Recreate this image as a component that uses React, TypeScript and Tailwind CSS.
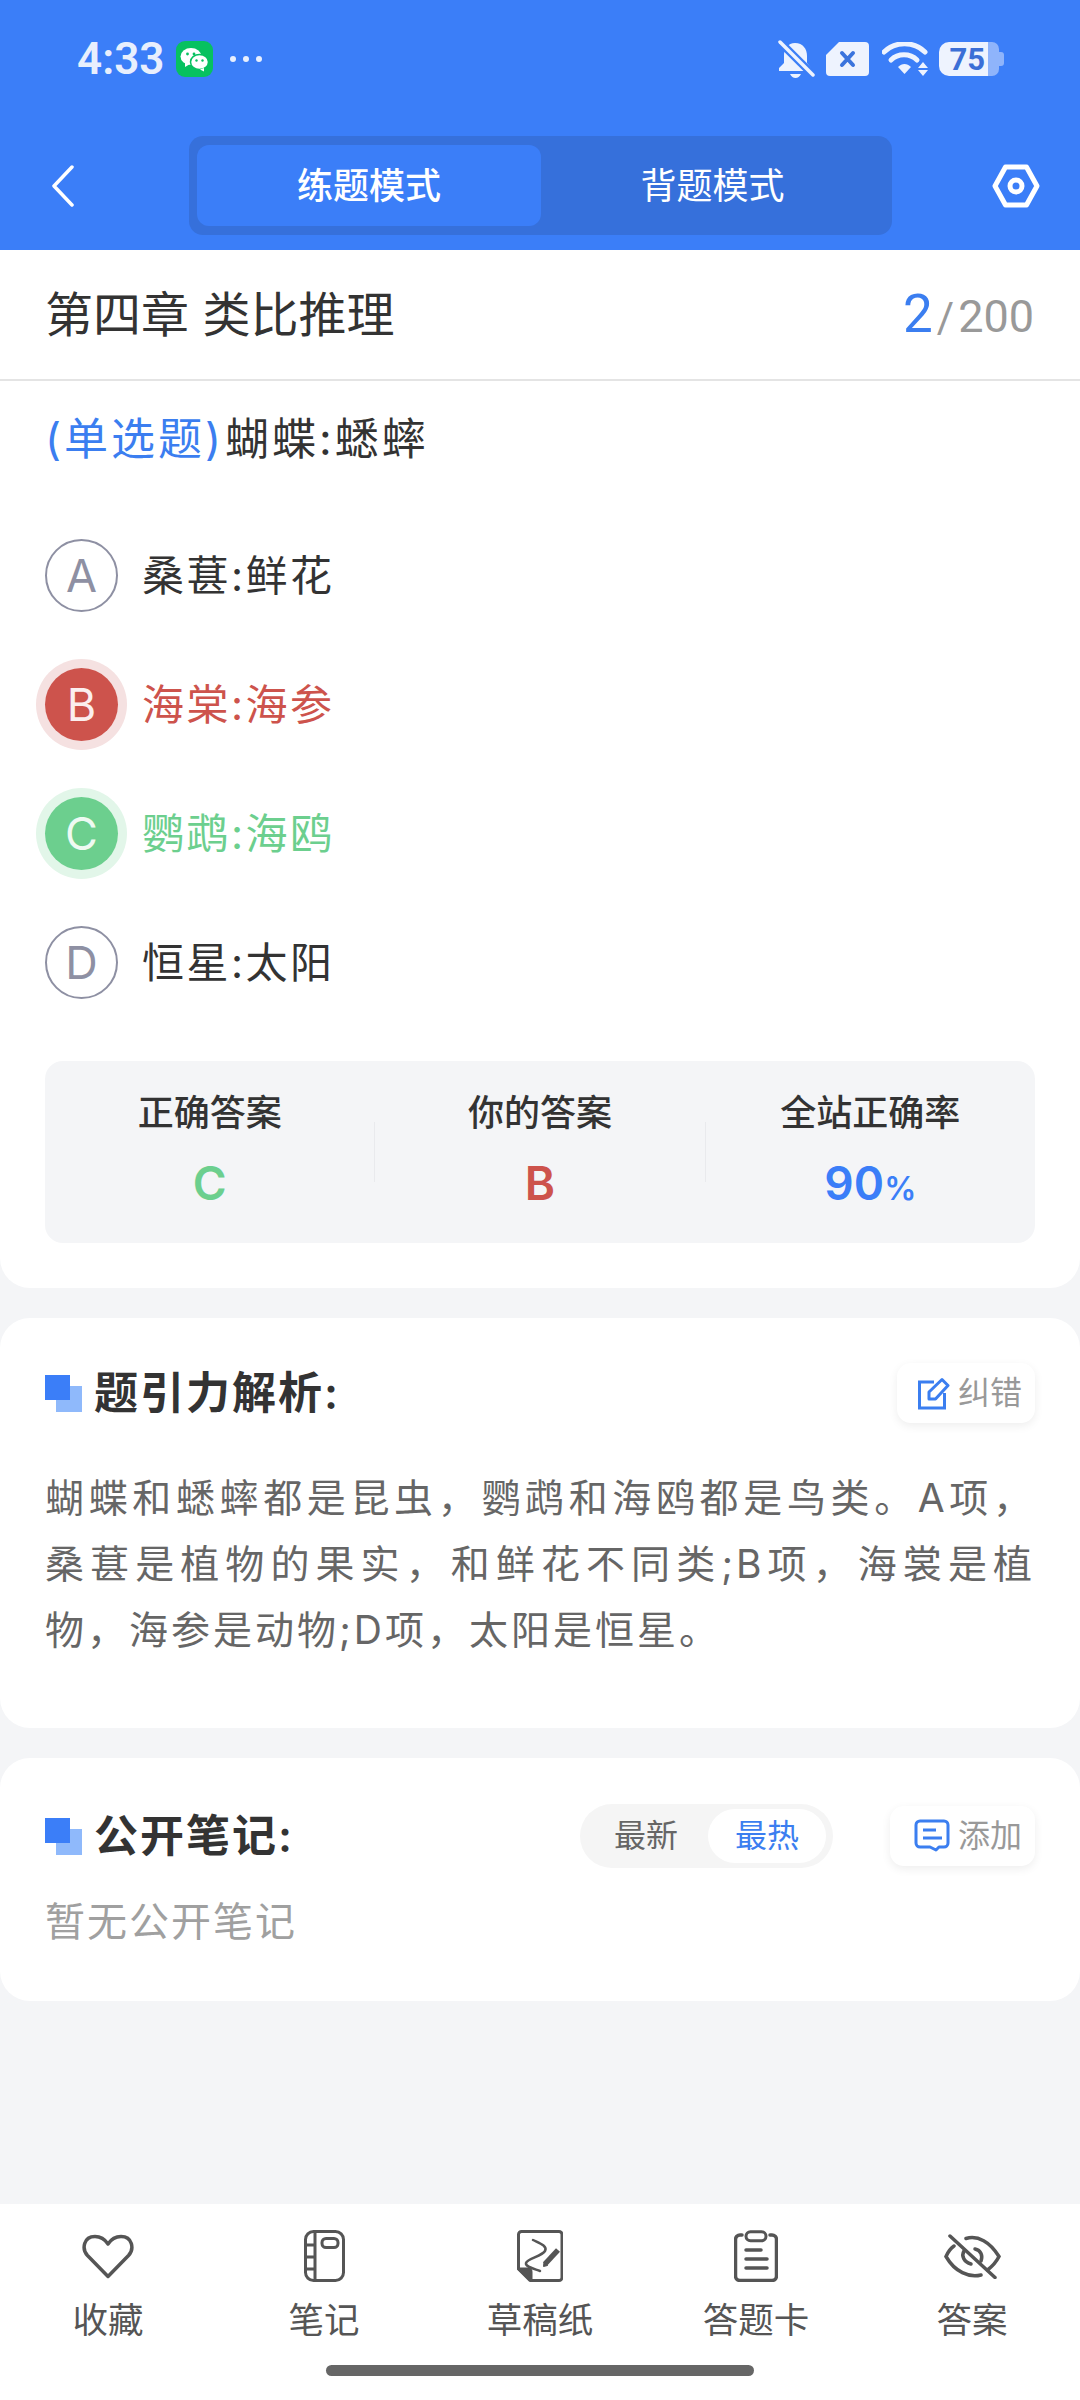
const options = [
  { key: 'A', text: '桑葚:鲜花', state: 'normal' },
  { key: 'B', text: '海棠:海参', state: 'wrong' },
  { key: 'C', text: '鹦鹉:海鸥', state: 'right' },
  { key: 'D', text: '恒星:太阳', state: 'normal' }
]

const HeartIcon = () => (
  <svg width="52" height="45" viewBox="0 0 52 45" fill="none" stroke="#555" strokeWidth="3.5" strokeLinejoin="round">
    <path d="M26 42.5 5.5 21.5C-.5 15 1.5 2.5 13 2.5c6 0 10 3 13 7.5 3-4.500 7-7.500 13-7.500 11.500 0 13.500 12.500 7.500 19Z" />
  </svg>
)

const NotebookIcon = () => (
  <svg width="41" height="52" viewBox="0 0 41 52" fill="none" stroke="#555" strokeWidth="3">
    <rect x="1.500" y="1.500" width="38" height="49" rx="8" />
    <path d="M11 2v48M2 15h9M2 27h9M2 39h9" />
    <rect x="18" y="8.500" width="16" height="9" rx="4" />
  </svg>
)

const DraftIcon = () => (
  <svg width="46" height="52" viewBox="0 0 46 52" fill="none" stroke="#555" strokeWidth="3">
    <path d="M13 50.500h29a3 3 0 0 0 3-3V4.500a3 3 0 0 0-3-3H4.500a3 3 0 0 0-3 3V39Z" strokeLinejoin="round" />
    <path d="M2 39h9q3 0 3 3v8Z" fill="#555" />
    <path d="M16 10c6 3 15 6 12 11S10 29 9 33s9 6 14 8" strokeWidth="2.500" strokeLinecap="round" />
    <path d="M28 34 41 20" strokeWidth="5.500" />
    <path d="M26.500 36.500 27 32l3.500 3.500Z" fill="#555" strokeWidth="1" />
  </svg>
)

const ClipboardIcon = () => (
  <svg width="44" height="52" viewBox="0 0 44 52" fill="none" stroke="#555" strokeWidth="3.500" strokeLinecap="round">
    <path d="M8 5H6a4.500 4.500 0 0 0-4.500 4.500V46A4.500 4.500 0 0 0 6 50.500h32a4.500 4.500 0 0 0 4.500-4.500V9.500A4.500 4.500 0 0 0 38 5h-2" />
    <rect x="12" y="1.800" width="20" height="9" rx="4.500" strokeWidth="3" />
    <path d="M12 20h15M12 29h21M12 38h21" />
  </svg>
)

const EyeOffIcon = () => (
  <svg width="57" height="45" viewBox="0 0 57 45" fill="none" stroke="#555" strokeWidth="3.500" strokeLinecap="round">
    <path d="M22 4.500C34 1 46 8 55 22.500c-2.500 5-7 10-11.500 13.500" />
    <path d="M37 41C25 44 11 38 2 22.500 4 18 7 14 10 12" />
    <path d="M20 17c-3 5 0 11 7 13M31 15c6 1 8 7 6 12" />
    <path d="M6 2 51 43.500" />
  </svg>
)

const tabs = [
  { label: '收藏', icon: <HeartIcon /> },
  { label: '笔记', icon: <NotebookIcon /> },
  { label: '草稿纸', icon: <DraftIcon /> },
  { label: '答题卡', icon: <ClipboardIcon /> },
  { label: '答案', icon: <EyeOffIcon /> }
]

const StatusBar = () => (
  <div className="flex h-[118px] items-center justify-between pl-[77px] pr-[76px]">
    <div className="flex items-center">
      <span className="w-[99px] font-['Roboto'] text-[44px] font-semibold leading-none text-[#e8effd]">4:33</span>
      <div className="flex h-[36px] w-[37px] items-center justify-center rounded-[9px] bg-[#07c160]">
        <svg width="29" height="25" viewBox="0 0 29 25">
          <ellipse cx="11" cy="9.500" rx="10.500" ry="8.500" fill="#fff" />
          <path d="M5 15v5l5-3Z" fill="#fff" />
          <ellipse cx="19.500" cy="15" rx="9" ry="7.500" fill="#fff" stroke="#07c160" strokeWidth="1.500" />
          <path d="M24 21v3.500l-4-2Z" fill="#fff" />
          <circle cx="7.500" cy="7" r="1.400" fill="#07c160" />
          <circle cx="14" cy="7" r="1.400" fill="#07c160" />
          <circle cx="16.500" cy="13.500" r="1.200" fill="#07c160" />
          <circle cx="22.500" cy="13.500" r="1.200" fill="#07c160" />
        </svg>
      </div>
      <div className="ml-[17px] flex gap-[7px]">
        <span className="size-[6px] rounded-full bg-[#e8effd]" />
        <span className="size-[6px] rounded-full bg-[#e8effd]" />
        <span className="size-[6px] rounded-full bg-[#e8effd]" />
      </div>
    </div>
    <div className="flex items-center">
      <svg width="37" height="39" viewBox="0 0 37 39" className="mr-[11px]">
        <path d="M17 3c8 0 12 6 12 13v7l4 5v3H1v-3l5-5v-8C6 9 10 3 17 3Z" fill="#eef3fe" />
        <path d="M12 34h11q-2 4-5.500 4T12 34Z" fill="#eef3fe" />
        <path d="M1 1l35 35" stroke="#3b7ef7" strokeWidth="8" />
        <path d="M2 2l33 33" stroke="#eef3fe" strokeWidth="3.500" strokeLinecap="round" />
      </svg>
      <svg width="43" height="34" viewBox="0 0 43 34" className="mr-[13px]">
        <path d="M13 0h26a4 4 0 0 1 4 4v26a4 4 0 0 1-4 4H4a4 4 0 0 1-4-4V13Z" fill="#eef3fe" />
        <path d="m16 11 11 12M27 11 16 23" stroke="#3b74dd" strokeWidth="4" strokeLinecap="round" />
      </svg>
      <svg width="46" height="34" viewBox="0 0 46 34" className="mr-[11px]">
        <path d="M2 10C13-1 32-1 43 10" fill="none" stroke="#eef3fe" strokeWidth="5" strokeLinecap="round" />
        <path d="M9 18c7-7 19-7 26 0" fill="none" stroke="#eef3fe" strokeWidth="5" strokeLinecap="round" />
        <path d="M16 25c4-4 9-4 13 0l-6.500 7Z" fill="#eef3fe" />
        <path d="M41 20l5 6H36ZM36 28h10l-5 6Z" fill="#eef3fe" />
      </svg>
      <div className="flex h-[34px] items-center">
        <div className="flex h-full w-[49px] items-center justify-end rounded-l-[10px] bg-[#eef3fe] pr-[3px] font-['Roboto'] text-[31px] font-bold leading-none text-[#3b6fd6]">
          75
        </div>
        <div className="h-full w-[11px] rounded-r-[7px] bg-[#8fb4fb]" />
        <div className="h-[14px] w-[5px] rounded-r-[3px] bg-[#8fb4fb]" />
      </div>
    </div>
  </div>
)

const Header = () => (
  <div className="h-[250px] bg-[#3b7ef8]">
    <StatusBar />
    <div className="mt-[18px] flex h-[99px] items-center pl-[51px] pr-[40px]">
      <svg width="24" height="42" viewBox="0 0 24 42" fill="none" stroke="#fff" strokeWidth="3.500" strokeLinecap="round" strokeLinejoin="round">
        <path d="M21 2 3 21l18 19" />
      </svg>
      <div className="ml-[114px] flex h-[99px] w-[703px] items-center rounded-[14px] bg-[#3670db] px-[8px] text-[36px] text-white">
        <div className="flex h-[81px] w-[344px] items-center justify-center rounded-[12px] bg-[#3b7ef8] font-medium">练题模式</div>
        <div className="flex h-[81px] flex-1 items-center justify-center">背题模式</div>
      </div>
      <svg width="48" height="44" viewBox="0 0 48 44" fill="none" stroke="#fff" strokeWidth="5" strokeLinejoin="round" className="ml-auto">
        <path d="M13.500 3h21L45 22 34.500 41h-21L3 22Z" />
        <circle cx="24" cy="22" r="6" />
      </svg>
    </div>
  </div>
)

const OptionRow = ({ option }: { option: (typeof options)[number] }) => {
  const circle =
    option.state === 'wrong'
      ? 'bg-[#cd534c] text-[#fbeeee] ring-[9px] ring-[#f5e1e1]'
      : option.state === 'right'
        ? 'bg-[#6ccf8e] text-[#eefaf2] ring-[9px] ring-[#e2f6e9]'
        : 'border-2 border-[#8e90a3] text-[#8e90a3]'
  const label =
    option.state === 'wrong'
      ? 'text-[#cd534c]'
      : option.state === 'right'
        ? 'text-[#6ccf8e]'
        : 'text-[#333]'
  return (
    <div className="flex h-[129px] items-center">
      <div className={`flex size-[73px] items-center justify-center rounded-full text-[45px] font-normal ${circle}`}>
        {option.key}
      </div>
      <span className={`ml-[24px] text-[42px] tracking-[2.500px] ${label}`}>{option.text}</span>
    </div>
  )
}

const Stat = ({ label, children }: { label: string; children: React.ReactNode }) => (
  <div className="flex flex-1 flex-col items-center">
    <span className="text-[36px] font-medium leading-[52px] text-[#333]">{label}</span>
    <div className="mt-[18px] h-[52px] leading-[52px]">{children}</div>
  </div>
)

const SectionTitle = ({ children }: { children: string }) => (
  <div className="flex items-center">
    <div className="relative size-[37px]">
      <div className="absolute bottom-0 right-0 size-[26px] bg-[#8fb9fb]" />
      <div className="absolute left-0 top-0 size-[25px] bg-[#3b7ef8]" />
    </div>
    <span className="ml-[12px] text-[44px] font-semibold tracking-[2px] text-[#333]">{children}</span>
  </div>
)

const SmallButton = ({ icon, label, width }: { icon: React.ReactNode; label: string; width: string }) => (
  <div className={`flex h-[60px] items-center justify-end gap-[8px] rounded-[14px] bg-white pr-[13px] text-[32px] text-[#999] shadow-[0_3px_10px_rgba(0,0,0,0.07)] ${width}`}>
    {icon}
    <span>{label}</span>
  </div>
)

const App = () => {
  return (
    <div className="flex h-[2400px] w-[1080px] flex-col overflow-hidden bg-[#f4f5f7] font-['Inter','Noto_Sans_CJK_SC',sans-serif]">
      <Header />

      <section className="rounded-b-[30px] bg-white pb-[45px]">
        <div className="flex h-[131px] items-center justify-between border-b-2 border-[#e4e4e4] pl-[45px] pr-[46px]">
          <h1 className="text-[48px] font-normal text-[#333]">第四章 类比推理</h1>
          <div className="flex items-baseline font-['Roboto'] text-[#999]">
            <span className="text-[53px] text-[#3b7ef0]">2</span>
            <span className="ml-[4px] text-[42px]">/</span>
            <span className="ml-[4px] text-[45px]">200</span>
          </div>
        </div>

        <div className="px-[45px]">
          <p className="flex h-[118px] items-start pt-[28px] text-[44px] leading-[60px] tracking-[3px] text-[#333]">
            <span className="text-[#3b7ef0]">(单选题)</span>
            <span className="ml-[1px]">蝴蝶:蟋蟀</span>
          </p>
          <div className="mt-[12px]">
            {options.map(option => (
              <OptionRow key={option.key} option={option} />
            ))}
          </div>

          <div className="mt-[34px] flex h-[182px] items-start rounded-[18px] bg-[#f4f5f7] pt-[26px]">
            <Stat label="正确答案">
              <span className="text-[46px] font-semibold text-[#6ccf8e]">C</span>
            </Stat>
            <div className="mt-[35px] h-[60px] w-px bg-[#e9eaed]" />
            <Stat label="你的答案">
              <span className="text-[46px] font-semibold text-[#cd534c]">B</span>
            </Stat>
            <div className="mt-[35px] h-[60px] w-px bg-[#e9eaed]" />
            <Stat label="全站正确率">
              <span className="text-[46px] font-semibold text-[#3b7ef8]">90</span>
              <span className="text-[32px] font-semibold text-[#3b7ef8]">%</span>
            </Stat>
          </div>
        </div>
      </section>

      <section className="mt-[30px] h-[410px] rounded-[30px] bg-white px-[45px] pt-[42px]">
        <div className="flex items-center justify-between">
          <SectionTitle>题引力解析:</SectionTitle>
          <SmallButton
            width="w-[138px]"
            label="纠错"
            icon={
              <svg width="33" height="33" viewBox="0 0 33 33" fill="none" stroke="#3b7ef0" strokeWidth="3">
                <path d="M17 5H2.500v26h25V16" />
                <path d="M12 22v-7L25 2.500l6 6L18.500 22Z" strokeLinejoin="round" />
              </svg>
            }
          />
        </div>
        <p className="mt-[39px] text-justify text-[39px] leading-[66px] tracking-[3px] text-[#666]">
          蝴蝶和蟋蟀都是昆虫，鹦鹉和海鸥都是鸟类。A项，桑葚是植物的果实，和鲜花不同类;B项，海裳是植物，海参是动物;D项，太阳是恒星。
        </p>
      </section>

      <section className="mt-[30px] h-[243px] rounded-[30px] bg-white px-[45px] pt-[45px]">
        <div className="flex items-center justify-between">
          <SectionTitle>公开笔记:</SectionTitle>
          <div className="flex items-center">
            <div className="flex h-[64px] w-[253px] items-center rounded-full bg-[#f5f5f5] pl-[34px] pr-[7px] text-[32px]">
              <span className="text-[#666]">最新</span>
              <span className="ml-[30px] flex h-[54px] flex-1 items-center justify-center rounded-full bg-white text-[#3b7ef0]">
                最热
              </span>
            </div>
            <div className="ml-[57px]">
              <SmallButton
                width="w-[145px]"
                label="添加"
                icon={
                  <svg width="36" height="34" viewBox="0 0 36 34" fill="none" stroke="#3b7ef0" strokeWidth="3">
                    <path d="M6 2h24a4 4 0 0 1 4 4v18a4 4 0 0 1-4 4h-5l-3 3-6-3H6a4 4 0 0 1-4-4V6a4 4 0 0 1 4-4Z" strokeLinejoin="round" />
                    <path d="M9 11h13M9 19h19" />
                  </svg>
                }
              />
            </div>
          </div>
        </div>
        <p className="mt-[25px] text-[40px] leading-[56px] tracking-[2px] text-[#a0a0a0]">暂无公开笔记</p>
      </section>

      <nav className="mt-auto flex h-[196px] flex-col bg-white">
        <div className="grid grid-cols-5 pt-[24px]">
          {tabs.map(tab => (
            <div key={tab.label} className="flex flex-col items-center">
              <div className="flex h-[56px] items-center justify-center">{tab.icon}</div>
              <span className="mt-[12px] text-[35.500px] leading-[50px] text-[#555]">{tab.label}</span>
            </div>
          ))}
        </div>
        <div className="mx-auto mt-[19px] h-[11px] w-[428px] rounded-full bg-[#666]" />
      </nav>
    </div>
  )
}

export default App
